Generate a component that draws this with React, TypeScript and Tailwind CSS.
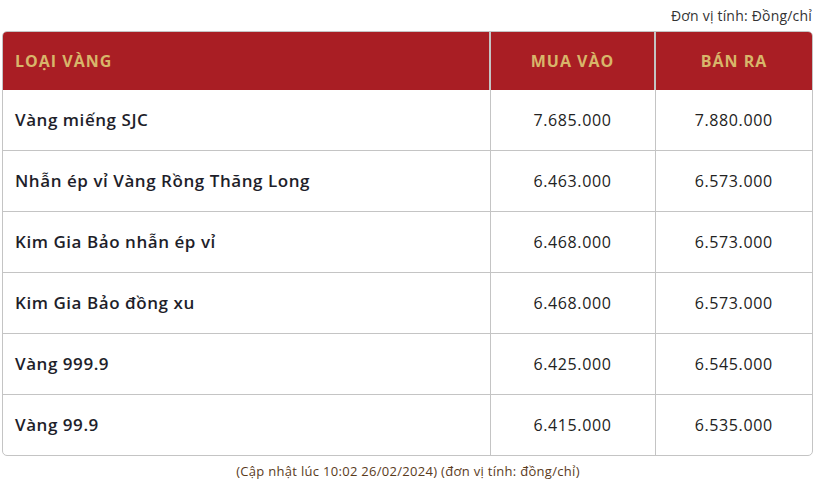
const rows = [
  { name: 'Vàng miếng SJC', buy: '7.685.000', sell: '7.880.000' },
  { name: 'Nhẫn ép vỉ Vàng Rồng Thăng Long', buy: '6.463.000', sell: '6.573.000' },
  { name: 'Kim Gia Bảo nhẫn ép vỉ', buy: '6.468.000', sell: '6.573.000' },
  { name: 'Kim Gia Bảo đồng xu', buy: '6.468.000', sell: '6.573.000' },
  { name: 'Vàng 999.9', buy: '6.425.000', sell: '6.545.000' },
  { name: 'Vàng 99.9', buy: '6.415.000', sell: '6.535.000' },
]

export default function App() {
  return (
    <div className="w-[816px] h-[496px] bg-white px-[2px] font-['Open_Sans',sans-serif] text-[#222]">
      <div className="h-[31px] flex items-center justify-end pr-[2px] text-[14px] tracking-[0.2px] text-[#333]">
        Đơn vị tính: Đồng/chỉ
      </div>
      <div className="w-[811px] overflow-hidden rounded-[5px] border border-[#c4c4c4]">
        <table className="w-full border-collapse">
          <thead>
            <tr className="h-[58px] bg-[#a91e24] text-[16px] tracking-[1px] font-bold text-[#d8b66a]">
              <th className="pl-[12px] text-left">LOẠI VÀNG</th>
              <th className="w-[165px] border-l-2 border-[#c4c4c4] text-center">MUA VÀO</th>
              <th className="w-[157px] border-l-2 border-[#c4c4c4] text-center">BÁN RA</th>
            </tr>
          </thead>
          <tbody>
            {rows.map((r, i) => (
              <tr key={i} className={i > 0 ? 'h-[61px] border-t border-[#c4c4c4]' : 'h-[60px]'}>
                <td className="pl-[12px] text-[17px] tracking-[0.55px] font-semibold text-[#1e1e2a]">{r.name}</td>
                <td className="border-l border-[#c4c4c4] text-center text-[16px] tracking-[0.6px]">{r.buy}</td>
                <td className="border-l border-[#c4c4c4] text-center text-[16px] tracking-[0.6px]">{r.sell}</td>
              </tr>
            ))}
          </tbody>
        </table>
      </div>
      <div className="mt-[6px] text-center text-[13px] tracking-[0.3px] text-[#5a3b1c]">
        (Cập nhật lúc 10:02 26/02/2024) (đơn vị tính: đồng/chỉ)
      </div>
    </div>
  )
}
